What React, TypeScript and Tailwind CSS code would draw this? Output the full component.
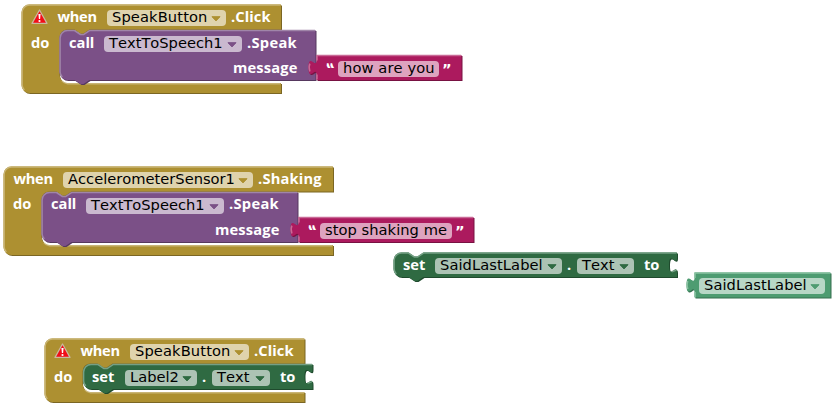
import React from "react";

type Tone = { fill: string; light: string; dark: string };

const GOLD: Tone = { fill: "#ad9031", light: "#c9b576", dark: "#7b6623" };
const PURPLE: Tone = { fill: "#7b5087", light: "#a085a9", dark: "#56385e" };
const PINK: Tone = { fill: "#ac1a5e", light: "#c96a96", dark: "#781242" };
const GREEN: Tone = { fill: "#2f6a42", light: "#75a085", dark: "#1f4a2d" };
const MINT: Tone = { fill: "#4e9c71", light: "#8bc2a2", dark: "#356e4f" };

const SOCKET = "v5c0,10 -8,-8 -8,7.5s8,-2.5 8,7.5";

function Shape({ tone, body, edge }: { tone: Tone; body: string; edge: string }) {
  return (
    <g>
      <path d={body} fill={tone.dark} transform="translate(1 1)" />
      <path d={body} fill={tone.fill} />
      <path d={edge} fill="none" stroke={tone.light} strokeWidth="1.5" strokeLinejoin="round" />
    </g>
  );
}

/** C-shaped event block: header row, statement cavity, closing bar. */
function EventShape({ w, cavity }: { w: number; cavity: number }) {
  const end = 26 + cavity;
  return (
    <g>
      <Shape
        tone={GOLD}
        body={`M0,8a8,8 0 0 1 8,-8H${w}V25H68l-6,4h-3l-6,-4H46a8,8 0 0 0 -8,8V${end - 8}a8,8 0 0 0 8,8H${w}v10H8a8,8 0 0 1 -8,-8z`}
        edge={`M2.8,${end + 7}A7.5,7.5 0 0 1 .6,${end + 2}V8a7.4,7.4 0 0 1 7.4,-7.4H${w - 0.5}M40.3,${end - 2.5}a8,8 0 0 0 5.7,3.2H${w - 0.5}`}
      />
      <path d={`M38.6,${end - 9}v1a7.6,7.6 0 0 0 7.6,7.8H${w + 1}v-2.5H46z`} fill="#fff" />
    </g>
  );
}

/** Statement block with a notch above and a bump below. */
function StatementShape({ x, y, w, h, tone, socket }: { x: number; y: number; w: number; h: number; tone: Tone; socket?: boolean }) {
  return (
    <g transform={`translate(${x} ${y})`}>
      <Shape
        tone={tone}
        body={`M0,8a8,8 0 0 1 8,-8H15l6,4h3l6,-4H${w}${socket ? SOCKET : ""}V${h}H30l-6,4h-3l-6,-4H8a8,8 0 0 1 -8,-8z`}
        edge={`M2.8,${h - 3}A7.5,7.5 0 0 1 .6,${h - 8}V8a7.4,7.4 0 0 1 7.4,-7.4H15l6,4h3l6,-4H${w - 0.5}${socket ? `M${w - 5},19.2l4.5,-1.6` : ""}`}
      />
    </g>
  );
}

/** Value block with a puzzle tab on its left side. */
function ValueShape({ x, y, w, tone }: { x: number; y: number; w: number; tone: Tone }) {
  return (
    <g transform={`translate(${x} ${y})`}>
      <Shape
        tone={tone}
        body={`M0,0H${w}V25H0V20c0,-10 -8,8 -8,-7.5s8,2.5 8,-7.5z`}
        edge={`M.5,24.5V19.5M-6.6,16.5Q-8.2,12 -6.6,8.6M.5,5.5V.6H${w - 0.5}`}
      />
    </g>
  );
}

function Canvas({ children }: { children: React.ReactNode }) {
  return (
    <svg className="absolute left-0 top-0 overflow-visible" width="10" height="10">
      <g transform="translate(.5 .5)">{children}</g>
    </svg>
  );
}

function Label({ className, children }: { className: string; children: string }) {
  return (
    <span className={`shrink-0 whitespace-nowrap font-['Open_Sans',sans-serif] text-[14.67px] font-bold leading-[13px] text-white ${className}`}>
      {children}
    </span>
  );
}

function Field({ className, arrow, children }: { className: string; arrow?: string; children: string }) {
  return (
    <span className={`flex h-4 shrink-0 justify-between whitespace-nowrap rounded-[4px] pl-[5px] pr-[5px] font-['DejaVu_Sans',sans-serif] text-[14.67px] leading-[14px] text-black [font-kerning:none] ${className}`}>
      <span>{children}</span>
      {arrow && (
        <svg className="mt-[5.5px] shrink-0" width="10" height="6" viewBox="0 0 10 6">
          <path d="M1,.7H9L5,4.9z" fill={arrow} stroke={arrow} strokeLinejoin="round" />
        </svg>
      )}
    </span>
  );
}

function Warning() {
  return (
    <svg className="-mt-px shrink-0" width="17" height="16" viewBox="0 0 17 16">
      <path d="M8.5,1L16,14.4H1z" fill="#f20d18" stroke="#c9b9a0" strokeWidth="1.2" strokeLinejoin="round" />
      <path d="M7.4,5.1h2.2l-.5,4.8h-1.2z" fill="#fff" />
      <circle cx="8.5" cy="12" r="1.1" fill="#fff" />
    </svg>
  );
}

function Quote({ className, children }: { className: string; children: string }) {
  return (
    <span className={`shrink-0 font-['DejaVu_Sans',sans-serif] text-[14.67px] font-bold leading-[15px] text-white ${className}`}>
      {children}
    </span>
  );
}

const goldField = "bg-[#dfd3ad]";
const purpleField = "bg-[#cab9cf]";
const pinkField = "bg-[#dea3bf]";
const greenField = "bg-[#acc3b4]";

export default function App() {
  return (
    <main className="relative h-[408px] w-[834px] overflow-hidden bg-white">
      <section className="absolute left-[21px] top-[4px] h-[90px] w-[442px]">
        <Canvas>
          <EventShape w={259.5} cavity={52.5} />
          <StatementShape x={38} y={25.5} w={256} h={50} tone={PURPLE} />
          <ValueShape x={295} y={50.5} w={145} tone={PINK} />
        </Canvas>
        <div className="relative flex h-[26px] items-start pl-[10px] pt-[6px]">
          <Warning />
          <Label className="ml-[9.5px] w-[49.5px] tracking-[-0.3px]">when</Label>
          <Field className={`w-[119px] tracking-[0.12px] ${goldField}`} arrow="#ad9031">SpeakButton</Field>
          <Label className="ml-[5px] tracking-[0.1px]">.Click</Label>
        </div>
        <div className="relative flex h-[25px] items-start pl-[10px] pt-[6px]">
          <Label className="w-[38px]">do</Label>
          <Label className="w-[35px]">call</Label>
          <Field className={`w-[138px] ${purpleField}`} arrow="#7b5087">TextToSpeech1</Field>
          <Label className="ml-[5px] tracking-[0.3px]">.Speak</Label>
        </div>
        <div className="relative flex h-[25px] items-start pl-[212px] pt-[6px]">
          <Label className="w-[92px] tracking-[0.15px]">message</Label>
          <Quote className="w-[13px] origin-[50%_30%] skew-x-[30deg]">“</Quote>
          <Field className={`w-[101px] tracking-[0.1px] ${pinkField}`}>how are you</Field>
          <Quote className="ml-[3px]">”</Quote>
        </div>
      </section>

      <section className="absolute left-[3px] top-[166px] h-[90px] w-[472px]">
        <Canvas>
          <EventShape w={329.5} cavity={52.5} />
          <StatementShape x={38} y={25.5} w={256} h={50} tone={PURPLE} />
          <ValueShape x={295} y={50.5} w={175} tone={PINK} />
        </Canvas>
        <div className="relative flex h-[26px] items-start pl-[10.5px] pt-[6px]">
          <Label className="w-[49.5px] tracking-[-0.3px]">when</Label>
          <Field className={`w-[190px] ${goldField}`} arrow="#ad9031">AccelerometerSensor1</Field>
          <Label className="ml-[5px] tracking-[0.2px]">.Shaking</Label>
        </div>
        <div className="relative flex h-[25px] items-start pl-[10px] pt-[5px]">
          <Label className="w-[38px]">do</Label>
          <Label className="w-[35px]">call</Label>
          <Field className={`mt-px w-[138px] ${purpleField}`} arrow="#7b5087">TextToSpeech1</Field>
          <Label className="ml-[5px] tracking-[0.3px]">.Speak</Label>
        </div>
        <div className="relative flex h-[25px] items-start pl-[212px] pt-[6px]">
          <Label className="w-[92px] tracking-[0.15px]">message</Label>
          <Quote className="w-[13px] origin-[50%_30%] skew-x-[30deg]">“</Quote>
          <Field className={`w-[132px] tracking-[0.05px] ${pinkField}`}>stop shaking me</Field>
          <Quote className="ml-[3px]">”</Quote>
        </div>
      </section>

      <section className="absolute left-[393px] top-[252px] h-[30px] w-[285px]">
        <Canvas>
          <StatementShape x={0} y={0} w={283.5} h={24.5} tone={GREEN} socket />
        </Canvas>
        <div className="relative flex items-start pl-[10px] pt-[6px]">
          <Label className="w-[32px]">set</Label>
          <Field className={`w-[127px] tracking-[0.08px] ${greenField}`} arrow="#2f6a42">SaidLastLabel</Field>
          <Label className="ml-[5px] w-[10px]">.</Label>
          <Field className={`w-[57px] ${greenField}`} arrow="#2f6a42">Text</Field>
          <Label className="ml-[10px]">to</Label>
        </div>
      </section>

      <section className="absolute left-[694px] top-[272px] h-[26px] w-[138px]">
        <Canvas>
          <ValueShape x={0} y={0} w={136} tone={MINT} />
        </Canvas>
        <div className="relative flex items-start pl-[5px] pt-[6px]">
          <Field className="w-[126px] tracking-[0.08px] bg-[#b8d7c6]" arrow="#4e9c71">SaidLastLabel</Field>
        </div>
      </section>

      <section className="absolute left-[44px] top-[338px] h-[65px] w-[270px]">
        <Canvas>
          <EventShape w={260} cavity={27.5} />
          <StatementShape x={38.5} y={25.5} w={229.5} h={25} tone={GREEN} socket />
        </Canvas>
        <div className="relative flex h-[26px] items-start pl-[10px] pt-[6px]">
          <Warning />
          <Label className="ml-[9.5px] w-[49.5px] tracking-[-0.3px]">when</Label>
          <Field className={`w-[119px] tracking-[0.12px] ${goldField}`} arrow="#ad9031">SpeakButton</Field>
          <Label className="ml-[5px] tracking-[0.1px]">.Click</Label>
        </div>
        <div className="relative flex h-[25px] items-start pl-[10px] pt-[6px]">
          <Label className="w-[38px]">do</Label>
          <Label className="w-[33px]">set</Label>
          <Field className={`w-[72px] ${greenField}`} arrow="#2f6a42">Label2</Field>
          <Label className="ml-[5px] w-[10px]">.</Label>
          <Field className={`w-[58px] ${greenField}`} arrow="#2f6a42">Text</Field>
          <Label className="ml-[10px]">to</Label>
        </div>
      </section>
    </main>
  );
}
